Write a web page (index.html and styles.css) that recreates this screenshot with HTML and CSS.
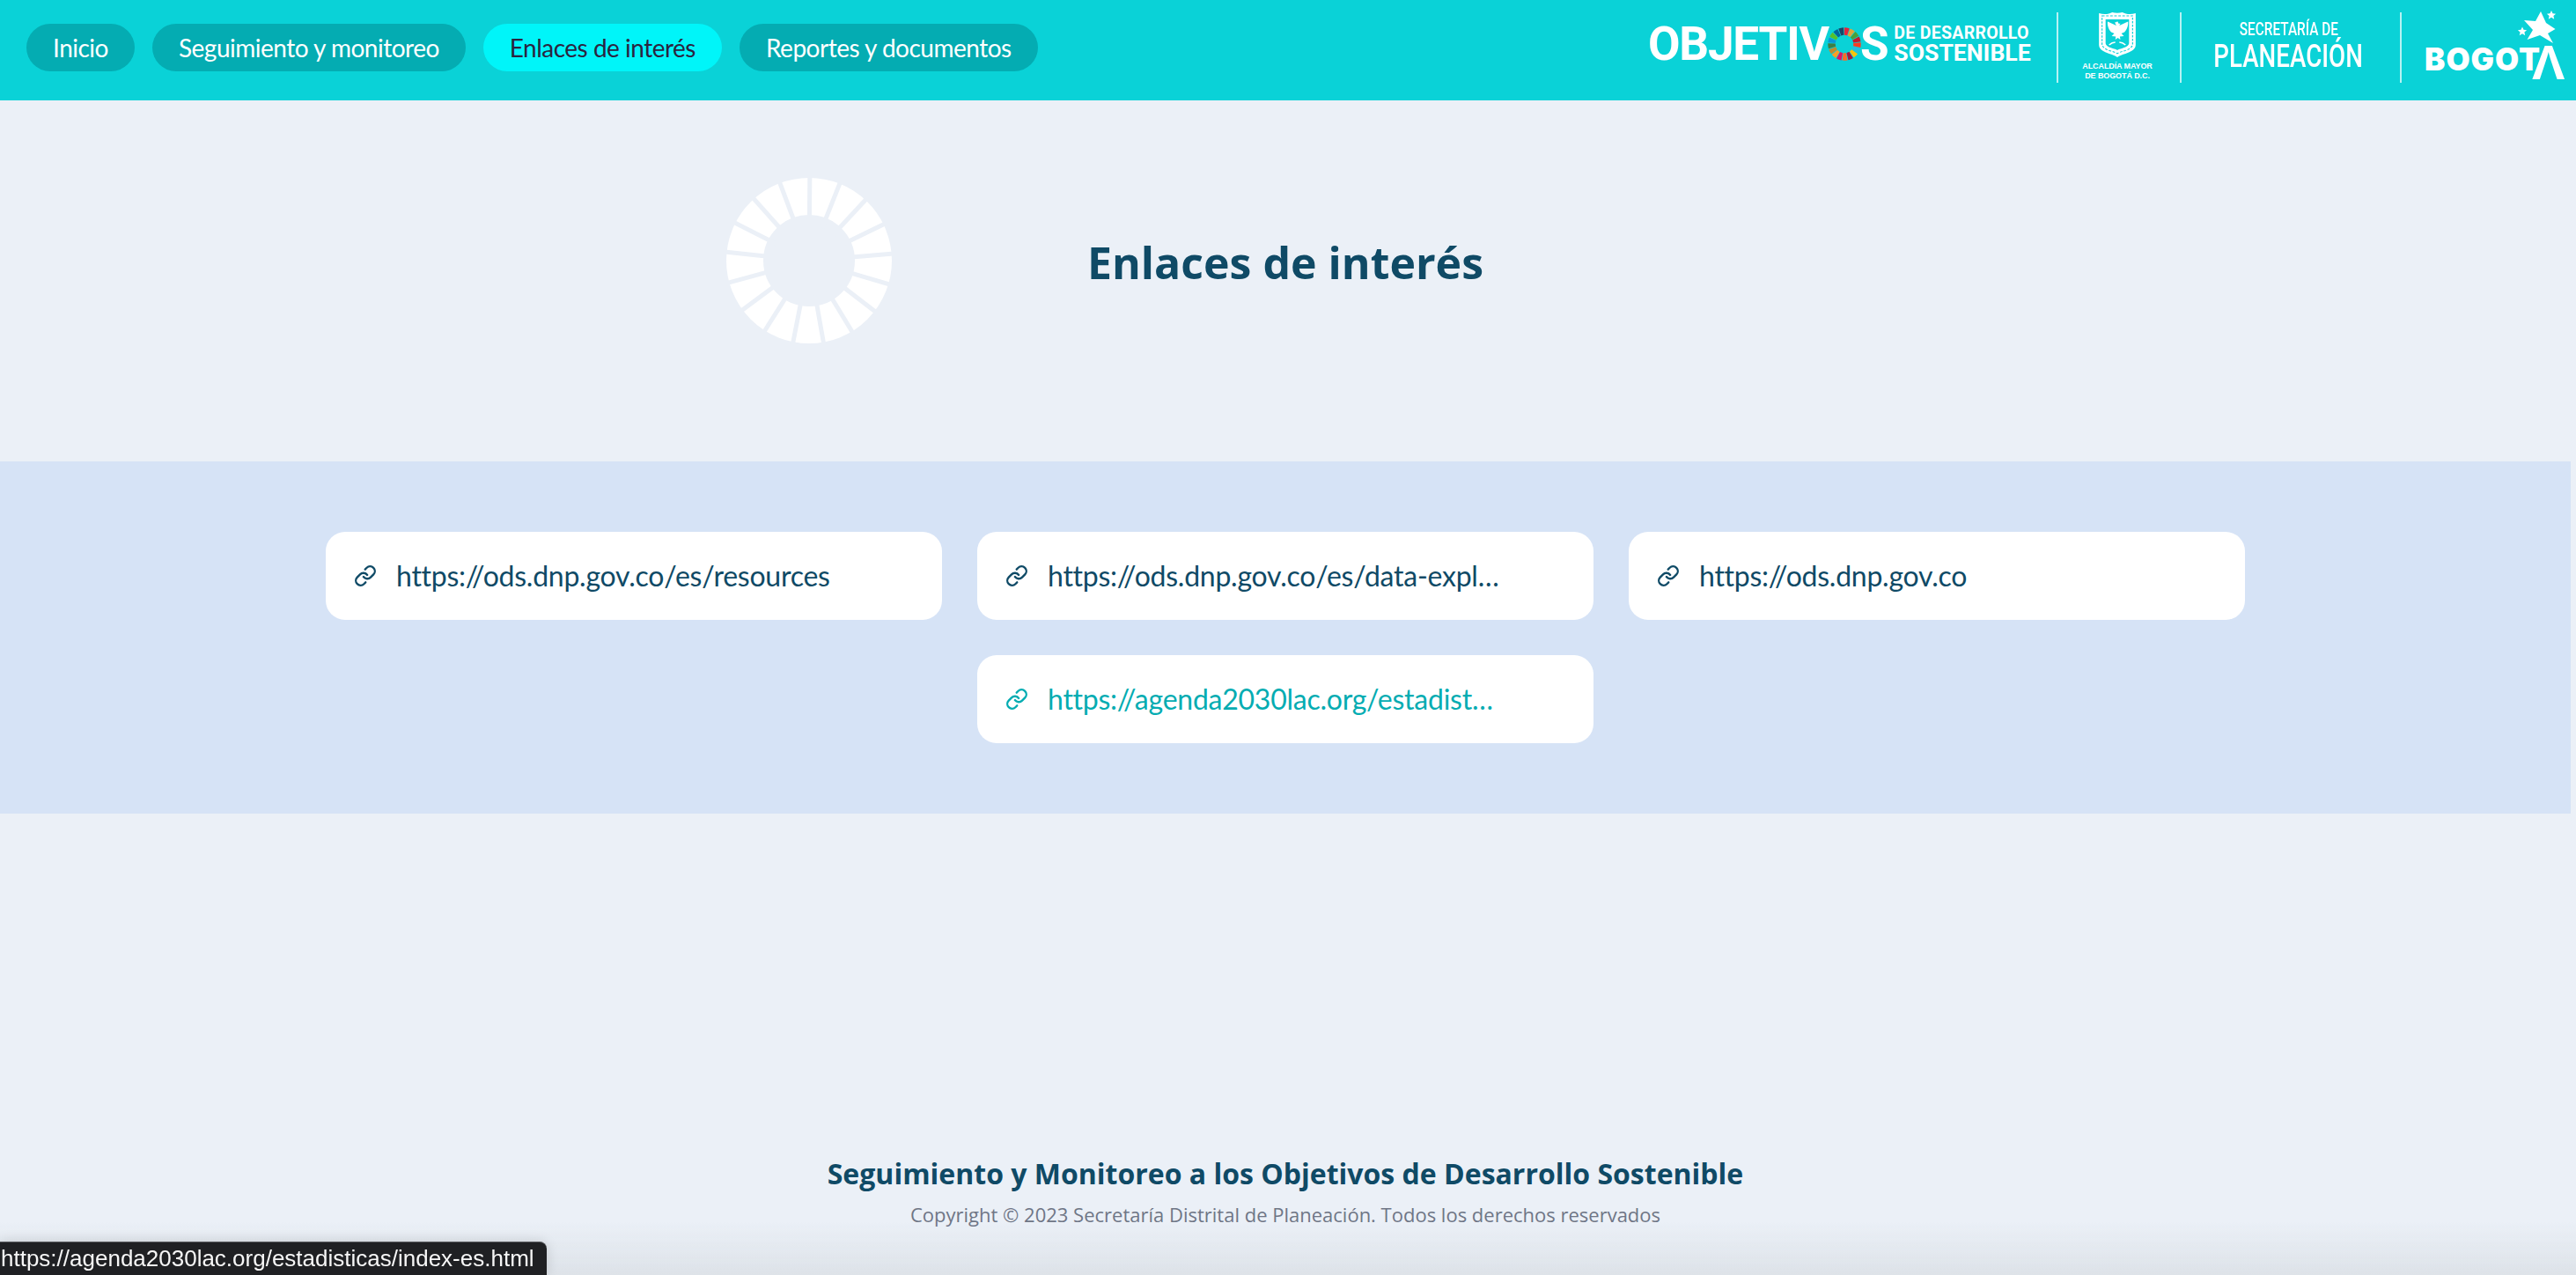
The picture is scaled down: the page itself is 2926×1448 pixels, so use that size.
FILE: index.html
```
<!DOCTYPE html>
<html lang="es">
<head>
<meta charset="utf-8">
<title>Enlaces de interés</title>
<link rel="stylesheet" href="styles.css">
</head>
<body>
<svg class="defs" width="0" height="0" aria-hidden="true">
  <defs>
    <g id="chain">
      <path d="M10 13a5 5 0 0 0 7.54.54l3-3a5 5 0 0 0-7.07-7.07l-1.72 1.71"/>
      <path d="M14 11a5 5 0 0 0-7.54-.54l-3 3a5 5 0 0 0 7.07 7.07l1.71-1.71"/>
    </g>
  </defs>
</svg>
<header class="topbar">
  <nav class="nav">
    <a class="pill">Inicio</a>
    <a class="pill">Seguimiento y monitoreo</a>
    <a class="pill pill-active">Enlaces de interés</a>
    <a class="pill">Reportes y documentos</a>
  </nav>
  <div class="logos">
    <div class="logo-ods">
      <span class="ods-big">OBJETIV</span>
      <svg class="ods-wheel" viewBox="-20 -20 40 40" fill="none" stroke-width="8.5">
        <g>
          <circle r="14.5" stroke="#19486a" stroke-dasharray="4.6 86.5" transform="rotate(-111.2)"/>
          <circle r="14.5" stroke="#00689d" stroke-dasharray="4.6 86.5" transform="rotate(-132.4)"/>
          <circle r="14.5" stroke="#56c02b" stroke-dasharray="4.6 86.5" transform="rotate(-153.6)"/>
          <circle r="14.5" stroke="#0a97d9" stroke-dasharray="4.6 86.5" transform="rotate(-174.8)"/>
          <circle r="14.5" stroke="#3f7e44" stroke-dasharray="4.6 86.5" transform="rotate(164)"/>
          <circle r="14.5" stroke="#bf8b2e" stroke-dasharray="4.6 86.5" transform="rotate(142.8)"/>
          <circle r="14.5" stroke="#fd9d24" stroke-dasharray="4.6 86.5" transform="rotate(121.6)"/>
          <circle r="14.5" stroke="#dd1367" stroke-dasharray="4.6 86.5" transform="rotate(100.4)"/>
          <circle r="14.5" stroke="#fd6925" stroke-dasharray="4.6 86.5" transform="rotate(79.2)"/>
          <circle r="14.5" stroke="#a21942" stroke-dasharray="4.6 86.5" transform="rotate(58)"/>
          <circle r="14.5" stroke="#fcc30b" stroke-dasharray="4.6 86.5" transform="rotate(36.8)"/>
          <circle r="14.5" stroke="#26bde2" stroke-dasharray="4.6 86.5" transform="rotate(15.6)"/>
          <circle r="14.5" stroke="#ff3a21" stroke-dasharray="4.6 86.5" transform="rotate(-5.6)"/>
          <circle r="14.5" stroke="#c5192d" stroke-dasharray="4.6 86.5" transform="rotate(-26.8)"/>
          <circle r="14.5" stroke="#4c9f38" stroke-dasharray="4.6 86.5" transform="rotate(-48)"/>
          <circle r="14.5" stroke="#dda63a" stroke-dasharray="4.6 86.5" transform="rotate(-69.2)"/>
          <circle r="14.5" stroke="#e5243b" stroke-dasharray="4.6 86.5" transform="rotate(-90.4)"/>
        </g>
      </svg>
      <span class="ods-big ods-s">S</span>
      <div class="ods-side">
        <span class="ods-de">DE DESARROLLO</span>
        <span class="ods-sos">SOSTENIBLE</span>
      </div>
    </div>
    <div class="logo-alc">
      <svg class="shield" viewBox="0 0 38 51" preserveAspectRatio="none">
        <path fill="#fff" d="M1 1c5 2 10 1 13-1 3 1 7 1 10 0 3 2 8 3 13 1v36c0 6-6 8-10 10-3 1-6 2-8 4-2-2-5-3-8-4-4-2-10-4-10-10z"/>
        <path fill="none" stroke="#0ad2d7" stroke-width="1" stroke-dasharray="2.5 1.5" d="M4 4h30v32c0 4-5 7-9 8-2 .7-4 1.500-6 2.800-2-1.300-4-2.100-6-2.800-4-1-9-4-9-8z"/>
        <path fill="#0ad2d7" d="M7.500 8h23v27c0 3-4 5-7 6-2 .6-3 1-4.500 2-1.500-1-2.500-1.400-4.500-2-3-1-7-3-7-6z"/>
        <path fill="#fff" d="M19 10l1.500 3 1.500-.4-1 2.400 8.500-4.500c.5 4-1 9-3.500 12l-3 1.500 2.500 3-4 .5.500 3.500-2.500-2-2.500 2 .5-3.500-4-.5 2.500-3-3-1.500c-2.500-3-4-8-3.500-12l8.500 4.500-1.500-3.500 2-.5z"/>
        <path fill="none" stroke="#fff" stroke-width="1.400" d="M11 37c2-2 4-3 6-3M27 37c-2-2-4-3-6-3"/>
      </svg>
      <span class="alc-text">ALCALDÍA MAYOR</span>
      <span class="alc-text">DE BOGOTÁ D.C.</span>
    </div>
    <div class="logo-plan">
      <span class="plan-small">SECRETARÍA DE</span>
      <span class="plan-big">PLANEACIÓN</span>
    </div>
    <div class="logo-bog">
      <svg class="stars" viewBox="0 0 45 38" fill="#fff">
        <path d="M27 1l6 13 10.500 7-8.500 5 6 11-15-9-14.500 5 6.500-11-10-11 13 1z"/>
        <path d="M39 0l1.500 3.300 3.600.4-2.700 2.400.8 3.600-3.200-1.900-3.200 1.900.8-3.600-2.700-2.400 3.600-.4z"/>
        <path d="M6 18.500l1.500 3.300 3.600.4-2.700 2.400.8 3.600-3.200-1.900-3.200 1.900.8-3.600-2.700-2.400 3.600-.4z"/>
      </svg>
      <span class="bog-word">BOGOT<span class="bog-a">Λ</span></span>
    </div>
  </div>
</header>

<main class="main">
  <section class="hero">
    <svg class="wheel" viewBox="-96 -96 192 192" aria-hidden="true">
      <circle class="wheel-ring" r="73" />
      <g class="wheel-gaps">
        <line y2="-100" y1="-40" transform="rotate(0.5)"/>
        <line y2="-100" y1="-40" transform="rotate(21.7)"/>
        <line y2="-100" y1="-40" transform="rotate(42.9)"/>
        <line y2="-100" y1="-40" transform="rotate(64)"/>
        <line y2="-100" y1="-40" transform="rotate(85.2)"/>
        <line y2="-100" y1="-40" transform="rotate(106.4)"/>
        <line y2="-100" y1="-40" transform="rotate(127.6)"/>
        <line y2="-100" y1="-40" transform="rotate(148.8)"/>
        <line y2="-100" y1="-40" transform="rotate(170)"/>
        <line y2="-100" y1="-40" transform="rotate(191.1)"/>
        <line y2="-100" y1="-40" transform="rotate(212.3)"/>
        <line y2="-100" y1="-40" transform="rotate(233.5)"/>
        <line y2="-100" y1="-40" transform="rotate(254.7)"/>
        <line y2="-100" y1="-40" transform="rotate(275.9)"/>
        <line y2="-100" y1="-40" transform="rotate(297)"/>
        <line y2="-100" y1="-40" transform="rotate(318.2)"/>
        <line y2="-100" y1="-40" transform="rotate(339.4)"/>
      </g>
    </svg>
    <h1 class="title">Enlaces de interés</h1>
  </section>

  <section class="band">
    <div class="cards">
      <a class="card">
        <svg class="chain" viewBox="0 0 24 24"><use href="#chain"/></svg>
        <span class="url">https://ods.dnp.gov.co/es/resources</span>
      </a>
      <a class="card">
        <svg class="chain" viewBox="0 0 24 24"><use href="#chain"/></svg>
        <span class="url">https://ods.dnp.gov.co/es/data-explorer</span>
      </a>
      <a class="card">
        <svg class="chain" viewBox="0 0 24 24"><use href="#chain"/></svg>
        <span class="url">https://ods.dnp.gov.co</span>
      </a>
      <a class="card card-hover">
        <svg class="chain" viewBox="0 0 24 24"><use href="#chain"/></svg>
        <span class="url">https://agenda2030lac.org/estadisticas/index-es.html</span>
      </a>
    </div>
  </section>
</main>

<footer class="footer">
  <p class="foot-title">Seguimiento y Monitoreo a los Objetivos de Desarrollo Sostenible</p>
  <p class="foot-copy">Copyright © 2023 Secretaría Distrital de Planeación. Todos los derechos reservados</p>
</footer>

<div class="shade"></div>
<div class="status">https://agenda2030lac.org/estadisticas/index-es.html</div>
</body>
</html>
```
FILE: styles.css
```
* { box-sizing: border-box; }
html, body { margin: 0; height: 100%; }
body {
  display: flex;
  flex-direction: column;
  height: 1448px;
  overflow: hidden;
  background: #ebf0f7;
  font-family: "Lato", sans-serif;
  color: #0f4a66;
}
.defs { position: absolute; }

/* Top bar */
.topbar {
  flex: none;
  height: 114px;
  display: flex;
  align-items: center;
  justify-content: space-between;
  padding: 0 0 0 30px;
  background: #0ad2d7;
}
.nav { display: flex; gap: 20px; margin-top: -6px; }
.pill {
  height: 54px;
  padding: 0 30px;
  display: flex;
  align-items: center;
  border-radius: 27px;
  background: #04acb2;
  color: #fff;
  font-size: 28px;
  letter-spacing: -.5px;
  white-space: nowrap;
}
.pill-active { background: #00f5f9; color: #2b2440; }

.logos { display: flex; align-items: stretch; height: 80px; margin-top: -6px; }

.logo-ods { display: flex; align-items: center; width: 462px; padding-bottom: 8px; color: #fff; font-family: "Roboto", sans-serif; font-weight: 700; }
.ods-big { font-size: 53px; line-height: 1; letter-spacing: -1.2px; margin-left: -2px; }
.ods-wheel { width: 40px; height: 40px; margin: 0 -2px; flex: none; }
.ods-s { margin-left: 0; margin-right: 7px; }
.ods-side { display: flex; flex-direction: column; align-items: flex-start; }
.ods-de { font-size: 19.500px; line-height: 20px; letter-spacing: .3px; white-space: nowrap; }
.ods-sos { font-size: 26.600px; line-height: 24px; white-space: nowrap; }

.logo-alc, .logo-plan, .logo-bog {
  display: flex;
  flex-direction: column;
  align-items: center;
  border-left: 2px solid rgba(255,255,255,.7);
  color: #fff;
}
.logo-alc { width: 140px; padding-right: 4px; font-family: "Liberation Sans", sans-serif; font-weight: 700; }
.shield { width: 44px; height: 51px; flex: none; margin-bottom: 5px; }
.alc-text { font-size: 9px; line-height: 10.500px; white-space: nowrap; letter-spacing: -.1px; }

.logo-plan { width: 250px; padding: 8px 5px 0 0; font-family: "Roboto", sans-serif; font-weight: 500; filter: blur(.4px); }
.plan-small { font-size: 20.500px; line-height: 22px; white-space: nowrap; transform: scaleX(.75); }
.plan-big { font-size: 36px; line-height: 40px; white-space: nowrap; transform: scaleX(.77); }

.logo-bog { width: 200px; position: relative; align-items: flex-start; padding: 36px 0 0 26px; }
.stars { position: absolute; left: 131px; top: -2px; width: 45px; height: 38px; }
.bog-word { font-family: "Inter", sans-serif; font-weight: 900; font-size: 35px; line-height: 34px; letter-spacing: 1px; white-space: nowrap; }
.bog-a { display: inline-block; font-family: "Liberation Sans", sans-serif; font-weight: 700; font-size: 56px; line-height: 34px; letter-spacing: 0; margin-left: -10px; vertical-align: -10px; }

/* Main */
.main { flex: 1; display: flex; flex-direction: column; }
.hero {
  height: 410px;
  display: flex;
  justify-content: flex-start;
  position: relative;
}
.wheel { position: absolute; left: 823px; top: 86px; width: 192px; height: 192px; }
.wheel-ring { fill: none; stroke: #fff; stroke-width: 42; }
.wheel-gaps line { stroke: #ebf0f7; stroke-width: 5; }
.title {
  margin: 0;
  padding-top: 149px;
  width: 2920px;
  text-align: center;
  font-family: "Open Sans", sans-serif;
  font-weight: 700;
  font-size: 50px;
  line-height: 70px;
  color: #0f4a66;
}

.band {
  width: 2920px;
  height: 400px;
  padding: 80px 370px;
  background: #d6e3f6;
}
.cards { display: flex; flex-wrap: wrap; justify-content: center; gap: 40px; }
.card {
  width: 700px;
  height: 100px;
  padding: 0 106px 0 32px;
  display: flex;
  align-items: center;
  gap: 22px;
  border-radius: 22px;
  background: #fff;
  color: #0f4a66;
}
.card-hover { color: #04acb2; padding-right: 110px; }
.chain {
  width: 26px;
  height: 26px;
  flex: none;
  fill: none;
  stroke: currentColor;
  stroke-width: 2.200;
  stroke-linecap: round;
  stroke-linejoin: round;
}
.url {
  font-size: 32px;
  line-height: 42px;
  letter-spacing: -.25px;
  white-space: nowrap;
  overflow: hidden;
  text-overflow: ellipsis;
}

/* Footer */
.footer { flex: none; height: 137px; text-align: center; width: 2920px; font-family: "Open Sans", sans-serif; }
.foot-title { margin: 0; font-size: 32px; line-height: 44px; font-weight: 700; color: #0f4a66; }
.foot-copy { margin: 9px 0 0; font-size: 22px; line-height: 30px; color: #6f7686; }

.shade {
  position: fixed;
  left: 0; right: 0; bottom: 0;
  height: 60px;
  background: linear-gradient(to bottom, rgba(205,210,215,0), rgba(205,210,215,.45));
  pointer-events: none;
}
.status {
  position: fixed;
  left: 0;
  bottom: 0;
  width: 621px;
  height: 38px;
  padding-left: 1px;
  display: flex;
  align-items: center;
  border-top-right-radius: 8px;
  background: #1f2023;
  border-top: 1px solid #5a5c60;
  box-shadow: 0 0 14px rgba(0,0,0,.15);
  color: #f6f6f6;
  font-family: "Liberation Sans", sans-serif;
  font-size: 26px;
  white-space: nowrap;
}
```
